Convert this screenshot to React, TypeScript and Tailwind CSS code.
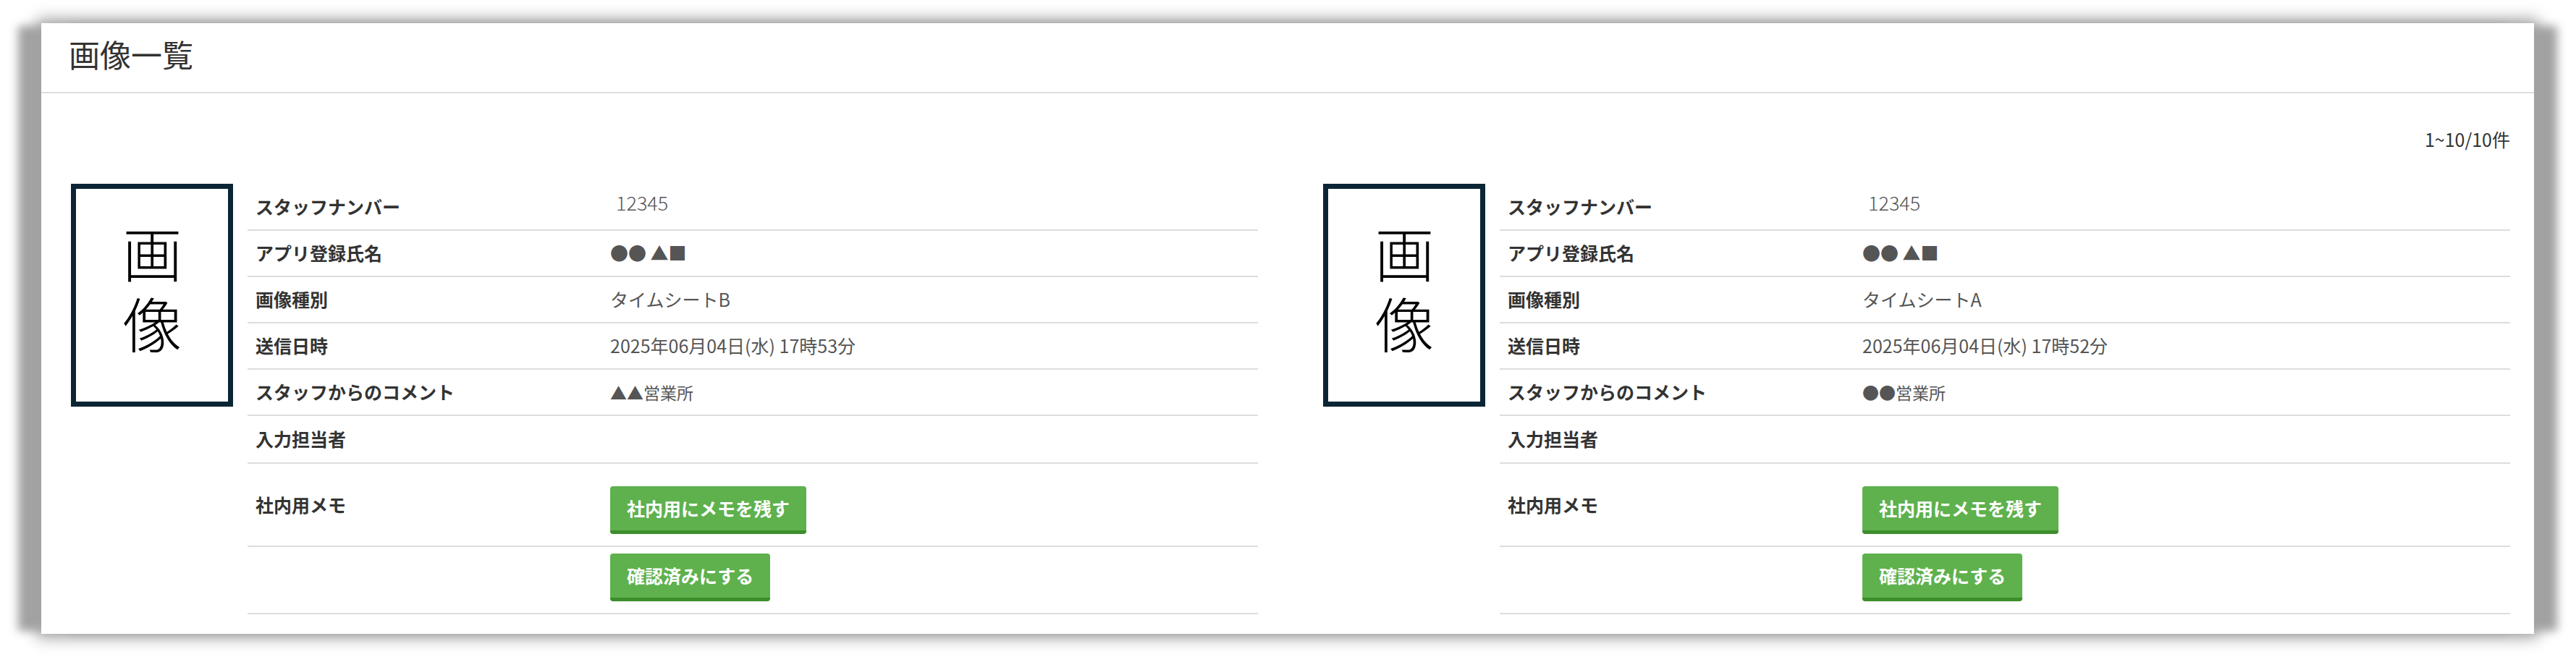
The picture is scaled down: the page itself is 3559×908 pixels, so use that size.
import React from "react";

type Card = {
  type: string;
  sentAt: string;
  comment: string;
};

const cards: Card[] = [
  { type: "タイムシートB", sentAt: "2025年06月04日(水) 17時53分", comment: "▲▲営業所" },
  { type: "タイムシートA", sentAt: "2025年06月04日(水) 17時52分", comment: "●●営業所" },
];

function Row({ label, tall, children }: { label: string; tall?: boolean; children?: React.ReactNode }) {
  return (
    <div className={tall ? "flex h-[66px] items-center border-b-2 border-[#dddddd]" : "flex h-[64px] items-center border-b-2 border-[#dddddd]"}>
      <div className="w-[490px] shrink-0 pl-[11px] text-[25px] font-bold text-[#333333]">{label}</div>
      <div className="pl-[11px] text-[25px] text-[#555555]">{children}</div>
    </div>
  );
}

function GreenButton({ children }: { children: React.ReactNode }) {
  return (
    <button className="inline-flex h-[66px] items-center rounded-[4px] border-b-[5px] border-[#3d8d2b] bg-[#5eb14d] px-[23px] text-[25px] leading-none font-bold text-white">
      {children}
    </button>
  );
}

function ImageCard({ card }: { card: Card }) {
  return (
    <div className="flex items-start">
      <div className="flex h-[308px] w-[224px] shrink-0 items-center justify-center border-[7px] border-[#0b2535] text-black">
        <span className="text-[82px] leading-none font-light tracking-[15px] [writing-mode:vertical-rl]">画像</span>
      </div>

      <div className="ml-[20px] flex-1 pt-[1px]">
        <Row label="スタッフナンバー">
          <span className="mb-[12px] ml-[8px] block text-[27px] font-light text-[#555555]">12345</span>
        </Row>
        <Row label="アプリ登録氏名">●● ▲■</Row>
        <Row label="画像種別">{card.type}</Row>
        <Row label="送信日時">{card.sentAt}</Row>
        <Row label="スタッフからのコメント">
          <span className="text-[23px]">{card.comment}</span>
        </Row>
        <Row label="入力担当者" tall />

        <div className="flex border-b-2 border-[#dddddd]">
          <div className="w-[490px] shrink-0 self-center pl-[11px] text-[25px] font-bold text-[#333333]">
            社内用メモ
          </div>
          <div className="pt-[31px] pb-[16px] pl-[11px]">
            <GreenButton>社内用にメモを残す</GreenButton>
          </div>
        </div>
        <div className="flex border-b-2 border-[#dddddd]">
          <div className="w-[490px] shrink-0" />
          <div className="pt-[9px] pb-[16px] pl-[11px]">
            <GreenButton>確認済みにする</GreenButton>
          </div>
        </div>
      </div>
    </div>
  );
}

export default function App() {
  return (
    <div className="min-h-screen bg-white pt-[32px] pr-[58px] pb-[32px] pl-[57px] font-['Noto_Sans_CJK_JP','Noto_Sans',sans-serif]">
      <div className="bg-white shadow-[-36px_0_12px_-4px_#a2a2a2,36px_0_12px_-4px_#a2a2a2,0_0_20px_6px_rgba(0,0,0,0.35)]">
        <div className="h-[97px] border-b-2 border-[#dddddd] pt-[21px] pl-[38px]">
          <h1 className="text-[43px] leading-none font-normal text-[#333333]">画像一覧</h1>
        </div>

        <div className="pt-[51px] pr-[33px] pb-[27px] pl-[41px]">
          <p className="text-right text-[25px] leading-[25px] text-[#333333]">1~10/10件</p>
          <div className="mt-[49px] grid grid-cols-2 gap-x-[90px]">
            {cards.map((card, i) => (
              <ImageCard key={i} card={card} />
            ))}
          </div>
        </div>
      </div>
    </div>
  );
}
